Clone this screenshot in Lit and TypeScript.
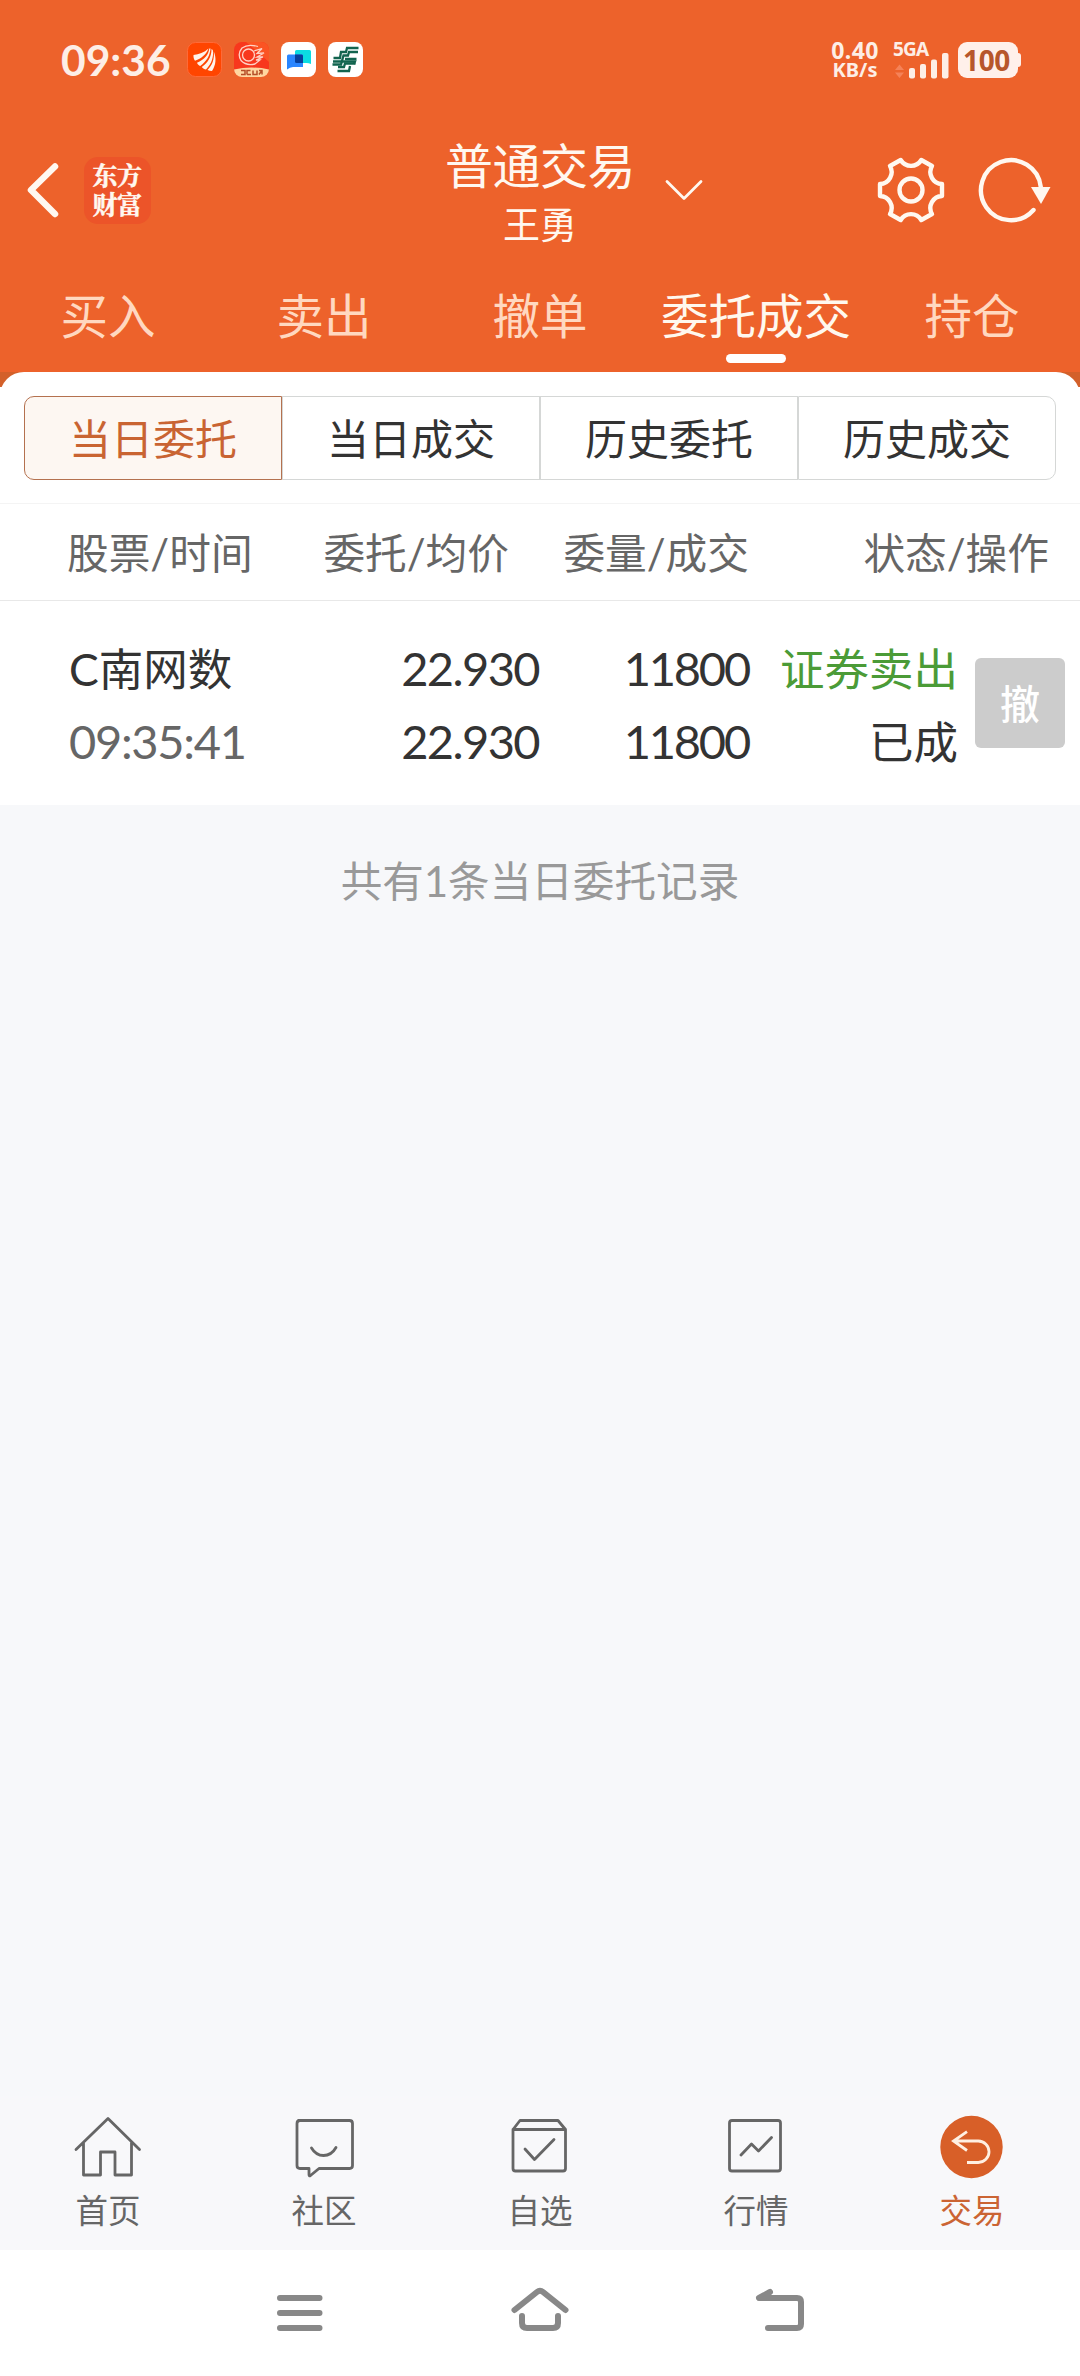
import { LitElement, html, css, svg } from "lit";
import { customElement, property, state } from "lit/decorators.js";
import { classMap } from "lit/directives/class-map.js";

const FONT = css`"Lato", "Noto Sans CJK SC", sans-serif`;

@customElement("status-bar")
class StatusBar extends LitElement {
  static styles = css`
    :host { display: flex; height: 120px; box-sizing: border-box; padding: 42px 59px 0 61px; justify-content: space-between; align-items: flex-start; color: #fdeee6; }
    .left, .right { display: flex; align-items: flex-start; height: 37px; }
    .time { font: 700 42.5px/36px ${FONT}; width: 126px; white-space: nowrap; }
    .apps { display: flex; gap: 12px; }
    .apps svg { width: 35px; height: 35px; display: block; }
    .speed { display: flex; flex-direction: column; width: 50px; align-items: center; font-family: "Noto Sans", sans-serif; font-weight: 700; margin-right: 12px; }
    .rate { font-size: 23px; line-height: 17px; letter-spacing: 0.4px; }
    .unit { font-size: 20px; line-height: 20px; margin-top: 1px; }
    .signal { width: 58px; height: 37px; display: flex; flex-direction: column; margin-right: 8px; }
    .signal svg { display: block; width: 58px; height: 37px; overflow: visible; }
    .net { font-family: "Noto Sans", sans-serif; font-weight: 700; font-size: 19px; letter-spacing: -0.8px; }
    .battery { display: flex; align-items: center; }
    .cell { width: 60px; height: 36px; border-radius: 9px; background: #fff0ea; color: #b7562b; font: 700 28px/37px "Noto Sans", sans-serif; text-align: center; letter-spacing: -0.4px; box-sizing: border-box; padding-right: 3px; }
    .nub { width: 3px; height: 14px; border-radius: 0 3px 3px 0; background: #fff0ea; }
  `;
  render() {
    return html`
      <div class="left">
        <div class="time">09:36</div>
        <div class="apps">
          <svg viewBox="0 0 35 35">
            <rect x=".5" y=".5" width="34" height="34" rx="8" fill="#ff4500" stroke="#ff6a38" />
            <path d="M6.500 13C12 12.500 17 10.500 21.500 6.500C19 12.500 14.500 16.500 8 18.800C6.800 17 6.300 15 6.500 13Z" fill="#fff3ea" />
            <path d="M22.300 6.500C21.500 13 17.500 17.500 10 20.800C10.800 22.500 11.800 23.500 13.200 24C19.500 19.500 23 13.500 23.500 6.500Z" fill="#fff3ea" />
            <path d="M24.500 7C24.500 15 21 20.500 14.800 25C16 26.500 17.300 27.300 19 27.500C24.500 22 27 14.500 25.800 8Z" fill="#fff3ea" />
            <path d="M26.800 9.500C29.500 16 29 23 25 29C23.500 29 22 28.700 20.500 28C25.500 23 27.500 17 26.800 9.500Z" fill="#fff3ea" />
          </svg>
          <svg viewBox="0 0 35 35">
            <defs><clipPath id="r"><rect width="35" height="35" rx="8" /></clipPath></defs>
            <g clip-path="url(#r)">
              <rect width="35" height="35" fill="#f8371d" />
              <path d="M12 0H35V20Z" fill="#fb5423" />
              <path d="M0 27.500Q17.500 23.500 35 27.500V35H0Z" fill="#ffd6a0" />
            </g>
            <g fill="none" stroke="#ffd3c6" stroke-width="1.300">
              <circle cx="14.500" cy="13" r="6" />
              <path d="M24 4.500Q14 1.500 8 6Q3 12 7 18.500Q12 24 21 22L26 18H22L29 15H23L30 11L23 11.500L28 6.500L20 9" />
            </g>
            <path d="M7 28.500h4v4h-4M13 32.500v-4h3.500M13 32.500h4M19 28.500v4h4v-4M25 28.500h3v4M25 32.500l3-4" fill="none" stroke="#b54e28" stroke-width="1.500" />
          </svg>
          <svg viewBox="0 0 35 35">
            <rect width="35" height="35" rx="8" fill="#fff" />
            <path d="M15.500 8H28.500Q30 8 30 9.500V22Q27 20.500 24 21H14V9.500Q14 8 15.500 8Z" fill="#0bdce2" />
            <path d="M7.500 12.500H22V25H12Q9 25 6 27.500V14Q6 12.500 7.500 12.500Z" fill="#2a86ff" />
            <path d="M14 12.500H20.500Q22 12.500 22 14V21H15.500Q14 21 14 19.500Z" fill="#063f9b" />
          </svg>
          <svg viewBox="0 0 35 35">
            <rect width="35" height="35" rx="8" fill="#fff" />
            <g fill="none" stroke="#12644f" stroke-width="2.300">
              <path d="M30.500 6H19L18 10H13L12 16H5.500" />
              <path d="M30 10H21L20 13.500H15.500L13 22.500H4.500" />
              <path d="M28.500 17H17M27.500 21.500H17L16 25H10" />
              <path d="M5 19.500H27L26 22M22 24L21 29H9.500" />
            </g>
          </svg>
        </div>
      </div>
      <div class="right">
        <div class="speed"><span class="rate">0.40</span><span class="unit">KB/s</span></div>
        <div class="signal">
          <svg viewBox="0 0 58 37">
            <text class="net" x="1" y="14" fill="#fdeee6">5GA</text>
            <path d="M3 28L7.500 22.500L12 28ZM3 30.500L7.500 36L12 30.500Z" fill="#f58258" />
            <g fill="#fdeee6">
              <rect x="17" y="26" width="6" height="10.500" rx="2" />
              <rect x="28" y="22" width="6" height="14.500" rx="2" />
              <rect x="39" y="17.500" width="6" height="19" rx="2" />
              <rect x="50" y="11" width="6.500" height="25.500" rx="2" />
            </g>
          </svg>
        </div>
        <div class="battery"><div class="cell">100</div><div class="nub"></div></div>
      </div>
    `;
  }
}

@customElement("title-bar")
class TitleBar extends LitElement {
  static styles = css`
    :host { display: grid; grid-template-columns: 1fr auto 1fr; height: 144px; color: #fff8f0; font-family: ${FONT}; }
    svg { display: block; fill: none; stroke: #fff8f0; stroke-linecap: round; stroke-linejoin: round; }
    .left { display: flex; padding: 37px 0 0 26px; gap: 23.5px; }
    .back { width: 34px; height: 67px; }
    .logo { width: 67px; height: 67px; box-sizing: border-box; padding-bottom: 4px; border-radius: 14px; background: #ec5429; display: flex; flex-direction: column; justify-content: center; align-items: center; font: 700 25px/29px "Noto Serif CJK SC", "Noto Sans CJK SC", sans-serif; letter-spacing: -0.5px; -webkit-text-stroke: 0.5px #fff8f0; }
    .names { display: flex; flex-direction: column; align-items: center; }
    .account { font-size: 48px; line-height: 60px; padding-top: 16px; letter-spacing: -0.5px; }
    .owner { font-size: 37px; line-height: 50px; padding-top: 4px; }
    .right { display: flex; align-items: flex-start; justify-content: space-between; padding: 36px 29px 0 30px; }
    .more { width: 38px; height: 22px; margin-top: 23px; }
    .tools { display: flex; gap: 32px; }
    .gear { width: 68px; height: 68px; }
    .reload { width: 74px; height: 68px; }
    .head { fill: #fff8f0; stroke: none; }
  `;
  render() {
    return html`
      <div class="left">
        <svg class="back" viewBox="0 0 34 67" stroke-width="6.500"><path d="M29 9.500L5 33L29 57" /></svg>
        <div class="logo"><span>东方</span><span>财富</span></div>
      </div>
      <div class="names">
        <div class="account">普通交易</div>
        <div class="owner">王勇</div>
      </div>
      <div class="right">
        <svg class="more" viewBox="0 0 38 22" stroke-width="2.800"><path d="M2 2.500L19 19.500L36 2.500" /></svg>
        <div class="tools">
          <svg class="gear" viewBox="-34 -34 68 68" stroke-width="4.400">
            <path d="M-10.300-30A12 12 0 0 0 10.300-30L21-24A12 12 0 0 0 31-6V6A12 12 0 0 0 21 24L10.300 30A12 12 0 0 0-10.300 30L-21 24A12 12 0 0 0-31 6V-6A12 12 0 0 0-21-24Z" />
            <circle r="11.500" />
          </svg>
          <svg class="reload" viewBox="-34 -34 74 68" stroke-width="4.400">
            <path d="M22.500 20A30 30 0 1 1 29.800-3" />
            <path class="head" d="M20-3H39.500L30 14Z" />
          </svg>
        </div>
      </div>
    `;
  }
}

@customElement("trade-tabs")
class TradeTabs extends LitElement {
  @property({ type: Array }) items: string[] = [];
  @property({ type: Number }) active = 0;
  static styles = css`
    :host { display: grid; grid-template-columns: repeat(5, 1fr); height: 108px; font: 47.5px/60px ${FONT}; color: #ffd8c0; }
    .tab { display: flex; flex-direction: column; align-items: center; padding-top: 22px; white-space: nowrap; }
    .on { color: #fff8ee; }
    .on::after { content: ""; width: 60px; height: 9px; border-radius: 4.5px; background: #fff; margin-top: 8px; }
  `;
  render() {
    return this.items.map((t, i) => html`<div class=${classMap({ tab: true, on: i === this.active })}>${t}</div>`);
  }
}

@customElement("segment-control")
class SegmentControl extends LitElement {
  @property({ type: Array }) items: string[] = [];
  @property({ type: Number }) active = 0;
  static styles = css`
    :host { display: grid; grid-template-columns: repeat(4, 1fr); height: 84px; font: 42px/85px ${FONT}; color: #333; }
    .seg { box-sizing: border-box; height: 84px; border: 1px solid #d5d7d6; text-align: center; white-space: nowrap; }
    .seg:first-child { border-radius: 10px 0 0 10px; }
    .seg:last-child { border-radius: 0 10px 10px 0; }
    .on { border-color: #b4714f; background: #fdf7f2; color: #c96432; }
  `;
  render() {
    return this.items.map((t, i) => html`<div class=${classMap({ seg: true, on: i === this.active })}>${t}</div>`);
  }
}

interface Order {
  name: string; time: string; price: string; avg: string;
  qty: string; filled: string; side: string; status: string;
}

@customElement("order-table")
class OrderTable extends LitElement {
  @property({ type: Array }) orders: Order[] = [];
  static styles = css`
    :host { display: block; font-family: ${FONT}; color: #333; white-space: nowrap; }
    .head { display: grid; grid-template-columns: 243px 199px 240px 300px; padding: 0 31px 0 67px; height: 98px; box-sizing: border-box; border-top: 1px solid #f4f4f4; border-bottom: 1px solid #e8e8e8; font-size: 41.7px; line-height: 98px; color: #666; }
    .head span { text-align: right; }
    .head span:first-child { text-align: left; }
    .row { display: grid; grid-template-columns: 201px 270px 210px 208px 90px; padding: 31px 15px 0 69px; height: 204px; box-sizing: border-box; font-size: 44.5px; line-height: 73px; }
    .cell { display: flex; flex-direction: column; text-align: right; }
    .cell:first-child { text-align: left; }
    .num { font-size: 47px; letter-spacing: -1.6px; padding-right: 1px; }
    .qty { letter-spacing: -2.2px; }
    .time { font-size: 47px; letter-spacing: -1.3px; color: #666; }
    .side { color: #4b9b37; }
    .cancel { width: 90px; height: 90px; margin: 26px 0 0 17px; border-radius: 6px; background: #ccc; color: #fff; font-size: 40px; line-height: 92px; font-weight: 500; text-align: center; }
  `;
  render() {
    return html`
      <div class="head"><span>股票/时间</span><span>委托/均价</span><span>委量/成交</span><span>状态/操作</span></div>
      ${this.orders.map((o) => html`
        <div class="row">
          <div class="cell"><span>${o.name}</span><span class="time">${o.time}</span></div>
          <div class="cell num"><span>${o.price}</span><span>${o.avg}</span></div>
          <div class="cell num qty"><span>${o.qty}</span><span>${o.filled}</span></div>
          <div class="cell"><span class="side">${o.side}</span><span>${o.status}</span></div>
          <div class="cancel">撤</div>
        </div>`)}
    `;
  }
}

const NAV = [
  { label: "首页", icon: svg`<path d="M4 35.500L36 4.500L67.500 35.500M11.500 29V61H28.500V38H43V61H59.500V29" />` },
  { label: "社区", icon: svg`<path d="M10.500 6.500H61.500Q64.500 6.500 64.500 9.500V51.500Q64.500 54.500 61.500 54.500H31L22.500 61.500Q21 62.500 21 60.500V54.500H12Q9 54.500 9 51.500V9.500Q9 6.500 12 6.500" /><path d="M23.500 34Q28 41.500 35.500 41.500Q43.500 41.500 48 33.500" />` },
  { label: "自选", icon: svg`<path d="M9 15.500L16 6.500H54L61.500 15.500V54.500Q61.500 57 59 57H11.500Q9 57 9 54.500ZM9 15.500H61.500M21 35L30.500 45.500L50 25.500" />` },
  { label: "行情", icon: svg`<rect x="9.500" y="6.500" width="51" height="50.500" rx="2.500" /><path d="M21 41L31.500 30L38.500 37L51.500 23.500" />` },
  { label: "交易", icon: svg`<circle class="disc" cx="35.500" cy="33" r="31.200" /><path class="arrow" d="M31 17.700L17.500 27L31 36.500M17.500 27H42.300A10.700 10.700 0 0 1 42.300 48.500H31" />` },
];

@customElement("bottom-nav")
class BottomNav extends LitElement {
  @property({ type: Number }) active = 0;
  static styles = css`
    :host { display: grid; grid-template-columns: repeat(5, 1fr); height: 154px; background: #f8f8fa; color: #666; font: 32.5px/40px ${FONT}; }
    .item { display: flex; flex-direction: column; align-items: center; padding-top: 18px; }
    svg { display: block; width: 72px; height: 66px; fill: none; stroke: #666; stroke-width: 2.800; stroke-linecap: round; stroke-linejoin: round; margin-bottom: 11px; }
    .disc { fill: #d85f28; stroke: none; }
    .arrow { stroke: #fff0e2; stroke-linecap: butt; stroke-linejoin: miter; }
    .on { color: #cb6433; }
  `;
  render() {
    return NAV.map((n, i) => html`
      <div class=${classMap({ item: true, on: i === this.active })}>
        <svg viewBox="0 0 72 66">${n.icon}</svg><span>${n.label}</span>
      </div>`);
  }
}

@customElement("system-keys")
class SystemKeys extends LitElement {
  static styles = css`
    :host { display: flex; justify-content: center; gap: 180px; height: 126px; box-sizing: border-box; padding-top: 31px; background: #fff; }
    svg { display: block; width: 60px; height: 60px; fill: none; stroke: #888; stroke-width: 6; stroke-linecap: round; stroke-linejoin: round; }
  `;
  render() {
    return html`
      <svg viewBox="0 0 60 60"><path d="M10 17H49.500M10 32H49.500M10 47H49.500" /></svg>
      <svg viewBox="0 0 60 60"><path d="M4.500 29L27 11Q30 8.500 33 11L55.500 29M12 35V42Q12 47 17 47H43Q48 47 48 42V35" /></svg>
      <svg viewBox="0 0 60 60"><path d="M20 11L9 17H47Q51 17 51 21V43Q51 47 47 47H18" /></svg>
    `;
  }
}

@customElement("app-root")
class AppRoot extends LitElement {
  @state() private tabs = ["买入", "卖出", "撤单", "委托成交", "持仓"];
  @state() private segments = ["当日委托", "当日成交", "历史委托", "历史成交"];
  @state() private orders: Order[] = [
    { name: "C南网数", time: "09:35:41", price: "22.930", avg: "22.930", qty: "11800", filled: "11800", side: "证券卖出", status: "已成" },
  ];
  static styles = css`
    :host { display: flex; flex-direction: column; width: 1080px; height: 2376px; background: #f7f8fa; overflow: hidden; }
    .header { background: #ed622b; }
    .edge { height: 15px; background: #d3602a; overflow: hidden; }
    .curve { height: 48px; border-radius: 24px; background: #fff; }
    .panel { background: #fff; }
    .segments { padding: 9px 24px 23px; }
    .summary { flex: 1; padding-top: 46px; text-align: center; font: 41.6px/60px ${FONT}; color: #999; }
  `;
  render() {
    return html`
      <div class="header">
        <status-bar></status-bar>
        <title-bar></title-bar>
        <trade-tabs .items=${this.tabs} .active=${3}></trade-tabs>
      </div>
      <div class="edge"><div class="curve"></div></div>
      <div class="panel">
        <div class="segments"><segment-control .items=${this.segments} .active=${0}></segment-control></div>
        <order-table .orders=${this.orders}></order-table>
      </div>
      <div class="summary">共有${this.orders.length}条当日委托记录</div>
      <bottom-nav .active=${4}></bottom-nav>
      <system-keys></system-keys>
    `;
  }
}
